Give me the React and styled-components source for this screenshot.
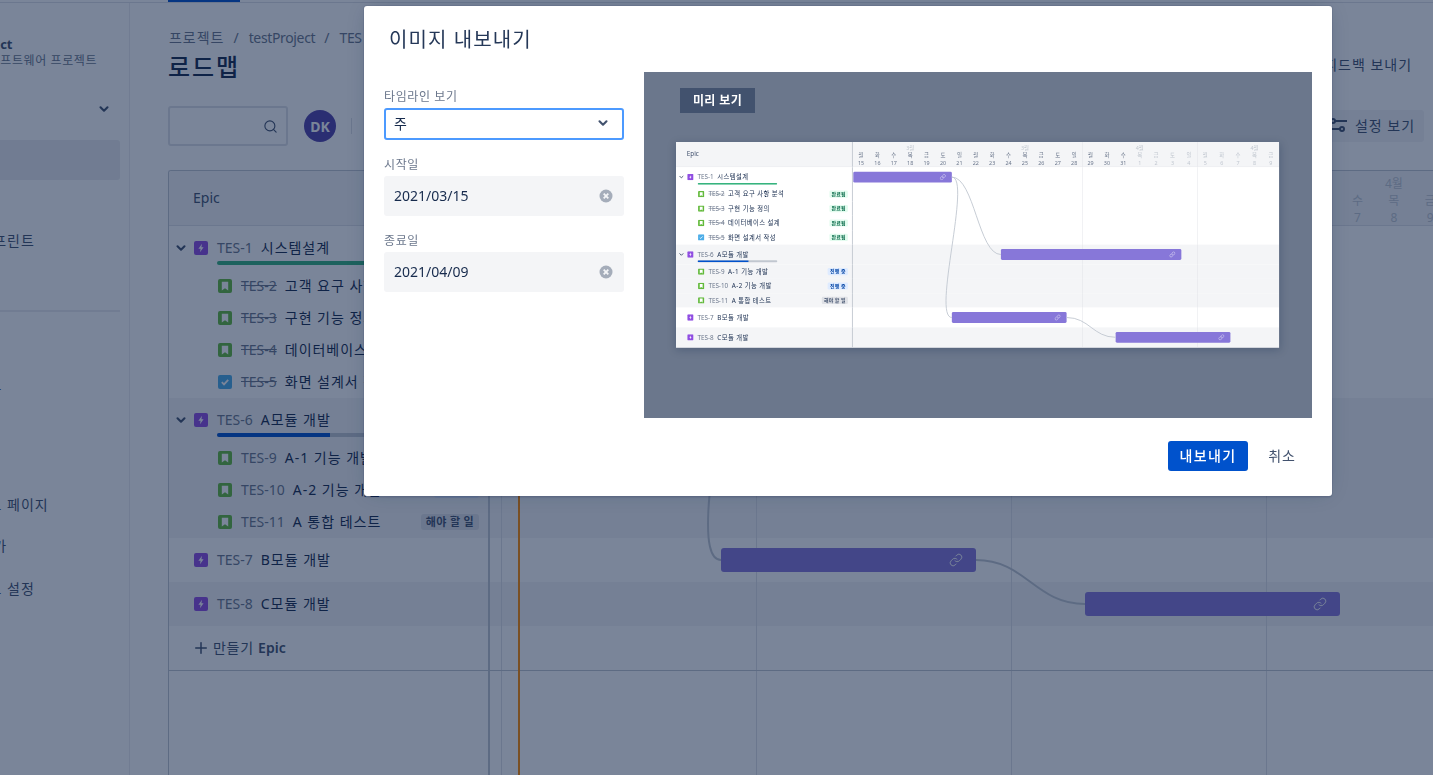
import React from 'react';
import styled, { createGlobalStyle } from 'styled-components';
import { ChevronDown, Search, Plus, Link as LinkIcon } from 'lucide-react';

const DAY = 255 / 7;
const GlobalStyle = createGlobalStyle`
  html, body { margin: 0; padding: 0; height: 100%; overflow: hidden; background: #fff; }
  body { font-family: "Noto Sans", "Noto Sans CJK KR", sans-serif; font-size: 14px; color: #172B4D; letter-spacing: .07em; }
  * { box-sizing: border-box; }
`;

const Page = styled.div`display: flex; flex-direction: column; height: 775px; width: 1433px; overflow: hidden;`;
const TopBar = styled.div`height: 3px; flex: none; background: #fff; border-bottom: 1px solid #DFE1E6; padding-left: 168px;`;
const TopTab = styled.div`width: 72px; height: 2px; background: #0052CC;`;
const Shell = styled.div`flex: 1; min-height: 0; display: flex;`;

const Sidebar = styled.aside`flex: none; width: 130px; border-right: 1px solid #EBECF0; overflow: hidden;`;
const SideInner = styled.div`width: 240px; margin-left: -110px; padding: 32px 10px 0 60px;`;
const ProjectName = styled.div`font-size: 13px; font-weight: 700; line-height: 18px; color: #42526E; letter-spacing: -.2px; white-space: nowrap; margin-left: -7px;`;
const ProjectType = styled.div`font-size: 12px; line-height: 16px; color: #6B778C; white-space: nowrap; letter-spacing: .05em;`;
const SectionRow = styled.div`display: flex; justify-content: flex-end; align-items: center; height: 20px; margin-top: 30px; padding-right: 9px; color: #42526E; margin-bottom: 21px;`;
const NavList = styled.nav`margin-left: -60px; padding-left: 60px;`;
const NavItem = styled.div`
  height: 40px; display: flex; align-items: center; white-space: nowrap; color: #42526E;
  margin: 0 0 ${p => p.$after || 0}px -60px; padding-left: 57px; border-radius: 3px;
  background: ${p => (p.$active ? '#EBECF0' : 'transparent')};
`;
const SideDivider = styled.div`height: 2px; background: #EBECF0; margin: 10px 0 12px -60px;`;

const Main = styled.main`flex: 1; min-width: 0; display: flex; flex-direction: column; padding: 24px 0 0 38px; overflow: hidden;`;
const HeadRow = styled.header`display: flex; justify-content: space-between; align-items: flex-end; padding-right: 21px;`;
const Crumbs = styled.div`display: flex; gap: 9px; line-height: 20px; color: #6B778C; padding: 1px 0 0 1px;`;
const CrumbLatin = styled.span`letter-spacing: -.35px;`;
const Title = styled.h1`margin: 3px 0 0; font-size: 24px; font-weight: 500; line-height: 32px; color: #172B4D; letter-spacing: .08em;`;
const Feedback = styled.div`line-height: 32px; padding-bottom: 2px; color: #42526E;`;
const Toolbar = styled.div`display: flex; align-items: center; margin-top: 23px; height: 40px; padding-right: 9px;`;
const SearchBox = styled.div`width: 120px; height: 40px; border: 2px solid #DFE1E6; border-radius: 3px; display: flex; align-items: center; justify-content: flex-end; padding-right: 8px; color: #42526E;`;
const Avatar = styled.div`width: 32px; height: 32px; margin-left: 16px; border-radius: 50%; background: #5243AA; color: #fff; font-weight: 700; font-size: 14px; display: flex; align-items: center; justify-content: center; letter-spacing: 0;`;
const ToolDivider = styled.div`width: 1px; height: 16px; margin-left: 15px; background: #DFE1E6;`;
const SettingsBtn = styled.div`margin-left: auto; height: 32px; padding: 0 9px 2px 8px; display: flex; align-items: center; gap: 8px; border-radius: 3px; background: #F4F5F7; color: #42526E;`;

const Table = styled.section`position: relative; flex: 1; min-height: 0; margin-top: 24px; border-top: 1px solid #C1C7D0; border-left: 1px solid #C1C7D0; border-top-left-radius: 3px; overflow: hidden; display: flex; flex-direction: column;`;
const TodayLine = styled.div`position: absolute; left: 349px; top: 0; bottom: 0; width: 2px; background: #FF8B00;`;

const gridLines = xs => xs.map(() => 'linear-gradient(#DFE1E6,#DFE1E6)').join(',');
const gridPos = xs => xs.map(x => `${x}px 0`).join(',');
const Row = styled.div`display: flex; height: ${p => p.$h}px; flex: none; background: ${p => (p.$band ? '#F4F5F7' : '#fff')};`;
const HeadWrap = styled(Row)`background: #F4F5F7; border-bottom: 1px solid #DFE1E6;`;
const LeftCell = styled.div`flex: none; width: ${p => p.$w}px; border-right: 2px solid #C1C7D0; min-width: 0; overflow: hidden;`;
const HeadLeft = styled(LeftCell)`display: flex; align-items: center; padding: 0 0 2px 24px; color: #42526E; letter-spacing: 0;`;
const EpicCell = styled(LeftCell)`padding: 12px 0 0 4px;`;
const EpicLine = styled.div`display: flex; align-items: center; height: 20px;`;
const ChevronSlot = styled.span`width: 16px; height: 16px; flex: none; margin-right: 5px; color: #42526E; display: flex; align-items: center; justify-content: center;`;
const Progress = styled.div`width: 177px; height: 3.5px; margin: 3px 0 0 44px; border-radius: 2px; overflow: hidden; background: #C1C7D0;`;
const ProgressFill = styled.div`height: 100%; width: ${p => p.$pct}%; background: ${p => p.$color};`;
const ChildCell = styled(LeftCell)`display: flex; align-items: center; padding: 0 9px 0 49px;`;
const Key = styled.span`color: #6B778C; margin: 0 8px 0 9px; padding-bottom: 2px; letter-spacing: 0; white-space: nowrap; text-decoration: ${p => (p.$done ? 'line-through' : 'none')};`;
const Name = styled.span`color: #172B4D; white-space: nowrap; flex: none; padding-bottom: 2px;`;
const Pill = styled.span`
  margin-left: auto; flex: none; height: 16px; padding: 0 5px; border-radius: 3px; font-size: 11px; font-weight: 700; line-height: 16px; white-space: nowrap; letter-spacing: .03em;
  background: ${p => p.$bg}; color: ${p => p.$fg};
`;
const TimelineCell = styled.div`
  flex: 1; min-width: 0; position: relative;
  background-image: ${p => gridLines(p.$lines)}; background-repeat: no-repeat; background-size: 1px 100%; background-position: ${p => gridPos(p.$lines)};
`;
const Weeks = styled(TimelineCell)`display: flex; padding-left: ${p => p.$offset}px; overflow: hidden;`;
const Week = styled.div`flex: none; width: 255px; padding-top: 4px; text-align: center; font-size: 12px; line-height: 17px; letter-spacing: 0;`;
const Month = styled.div`color: #C1C7D0;`;
const Days = styled.div`display: flex;`;
const Day = styled.div`flex: 1; color: ${p => (p.$muted ? '#C1C7D0' : '#6B778C')};`;
const Bar = styled.div`
  position: absolute; top: 10px; height: 24px; left: ${p => p.$left}px; width: ${p => p.$width}px; border-radius: 3px; background: #8777D9; color: #fff;
  display: flex; align-items: center; justify-content: flex-end; padding-right: 13px;
`;
const BodyWrap = styled.div`position: relative; flex: none;`;
const LinkLayer = styled.svg`position: absolute; top: 0; left: ${p => p.$left}px; overflow: visible; pointer-events: none;`;
const CreateCell = styled(LeftCell)`display: flex; align-items: center; padding: 0 0 0 23px; gap: 3px; color: #42526E;`;
const CreateText = styled.span`padding-bottom: 2px; letter-spacing: .05em;`;
const CreateEpic = styled.b`color: #42526E; letter-spacing: 0; font-weight: 600;`;
const Filler = styled.div`flex: 1; min-height: 0; display: flex; border-top: 1px solid #C1C7D0;`;

const Overlay = styled.div`position: fixed; inset: 0; background: rgba(9,30,66,.54); padding: 6px 0 0 364px;`;
const Modal = styled.div`width: 968px; height: 490px; background: #fff; border-radius: 3px; box-shadow: 0 0 0 1px rgba(9,30,66,.08), 0 2px 1px rgba(9,30,66,.08), 0 0 20px -6px rgba(9,30,66,.31); display: flex; flex-direction: column;`;
const ModalTitle = styled.h2`margin: 0; height: 66px; padding: 20px 0 0 25px; font-size: 20px; line-height: 28px; font-weight: 400; color: #253858; letter-spacing: .055em;`;
const ModalBody = styled.div`display: flex; gap: 20px; padding: 0 20px;`;
const Form = styled.div`flex: none; width: 240px; display: flex; flex-direction: column; padding-top: 16px;`;
const FieldLabel = styled.label`font-size: 12px; line-height: 16px; color: #6B778C; margin-bottom: 3px; letter-spacing: .05em; padding-top: ${p => p.$nudge || 0}px;`;
const SelectBox = styled.div`height: 32px; border: 2px solid #4C9AFF; border-radius: 3px; display: flex; align-items: center; justify-content: space-between; padding: 0 12px 2px 8px; color: #172B4D; margin-bottom: 14px;`;
const DateBox = styled.div`height: 40px; background: #F4F5F7; border-radius: 3px; display: flex; align-items: center; justify-content: space-between; padding: 0 11px 0 10px; color: #172B4D; margin-bottom: 14px; letter-spacing: 0;`;
const DateValue = styled.span`padding-bottom: 2px;`;
const PreviewPane = styled.div`flex: none; width: 668px; height: 346px; background: #6B778C; padding: 16px 32px;`;
const PreviewTag = styled.div`width: 75px; height: 25px; margin-left: 4px; background: #42526E; color: #fff; font-size: 12px; font-weight: 700; line-height: 25px; text-align: center; letter-spacing: .03em;`;
const PreviewStage = styled.div`width: 604px; height: 206px; margin-top: 29px; filter: blur(.5px); box-shadow: 0 2px 8px rgba(9,30,66,.25);`;
const PreviewSheet = styled.div`width: 1340px; height: 457px; transform: scale(.45); transform-origin: 0 0; background: #fff; overflow: hidden;`;
const Footer = styled.div`display: flex; justify-content: flex-end; align-items: center; gap: 4px; padding: 23px 20px 0;`;
const PrimaryBtn = styled.button`width: 80px; height: 30px; border: 0; border-radius: 3px; background: #0052CC; color: #fff; font: 500 14px "Noto Sans", "Noto Sans CJK KR", sans-serif; padding: 0 0 2px; letter-spacing: .1em;`;
const CancelBtn = styled.button`width: 60px; height: 30px; border: 0; background: transparent; color: #42526E; font: 400 14px "Noto Sans", "Noto Sans CJK KR", sans-serif; padding: 0 0 2px; letter-spacing: .07em;`;

const EpicIcon = () => (
  <svg width="14" height="14" viewBox="0 0 14 14" style={{ flex: 'none' }}>
    <rect width="14" height="14" rx="2" fill="#904EE2" />
    <path d="M8 2.8 4.4 7.7h2.2L6 11.2l3.6-4.9H7.4z" fill="#fff" />
  </svg>
);
const StoryIcon = () => (
  <svg width="14" height="14" viewBox="0 0 14 14" style={{ flex: 'none' }}>
    <rect width="14" height="14" rx="2" fill="#63BA3C" />
    <path d="M3.8 2.8h6.4v8.6L7 9.2l-3.2 2.2z" fill="#fff" />
  </svg>
);
const TaskIcon = () => (
  <svg width="14" height="14" viewBox="0 0 14 14" style={{ flex: 'none' }}>
    <rect width="14" height="14" rx="2" fill="#4BADE8" />
    <path d="M3.8 7.2 6 9.4l4.2-4.6" fill="none" stroke="#fff" strokeWidth="1.8" />
  </svg>
);
const ClearIcon = () => (
  <svg width="14" height="14" viewBox="0 0 14 14">
    <circle cx="7" cy="7" r="6.5" fill="#A5ADBA" />
    <path d="M4.7 4.7l4.6 4.6M9.3 4.7 4.7 9.3" stroke="#F4F5F7" strokeWidth="1.8" />
  </svg>
);
const SlidersIcon = () => (
  <svg width="18" height="14" viewBox="0 0 18 14" fill="none" stroke="#42526E" strokeWidth="2">
    <circle cx="4" cy="3" r="2" />
    <path d="M6 3h12M0 11h11" />
    <circle cx="13" cy="11" r="2" />
  </svg>
);
const Chevron = ({ color }) => <ChevronDown size={14} strokeWidth={3.6} color={color || 'currentColor'} />;

const STATUS = {
  done: { label: '완료됨', bg: '#E3FCEF', fg: '#006644' },
  doing: { label: '진행 중', bg: '#DEEBFF', fg: '#0747A6' },
  todo: { label: '해야 할 일', bg: '#DFE1E6', fg: '#42526E' },
};

const GROUPS = [
  { key: 'TES-1', name: '시스템설계', bar: [0, 6], progress: [100, '#36B37E'], children: [
    { key: 'TES-2', name: '고객 요구 사항 분석', done: true, st: 'done' },
    { key: 'TES-3', name: '구현 기능 정의', done: true, st: 'done' },
    { key: 'TES-4', name: '데이터베이스 설계', done: true, st: 'done' },
    { key: 'TES-5', name: '화면 설계서 작성', done: true, st: 'done', task: true },
  ] },
  { key: 'TES-6', name: 'A모듈 개발', band: true, bar: [9, 11], progress: [64, '#0052CC'], children: [
    { key: 'TES-9', name: 'A-1 기능 개발', st: 'doing' },
    { key: 'TES-10', name: 'A-2 기능 개발', st: 'doing' },
    { key: 'TES-11', name: 'A 통합 테스트', st: 'todo' },
  ] },
  { key: 'TES-7', name: 'B모듈 개발', bar: [6, 7] },
  { key: 'TES-8', name: 'C모듈 개발', band: true, bar: [16, 7] },
];

const WEEKS = [
  { month: '3월', days: [15, 16, 17, 18, 19, 20, 21] },
  { month: '3월', days: [22, 23, 24, 25, 26, 27, 28] },
  { month: '4월', days: [29, 30, 31, 1, 2, 3, 4] },
  { month: '4월', days: [5, 6, 7, 8, 9, 10, 11] },
];
const NAMES = ['월', '화', '수', '목', '금', '토', '일'];

const curve = (x1, y1, x2, y2, d) => `M${x1} ${y1}C${x1 + d} ${y1} ${x2 - d} ${y2} ${x2} ${y2}`;

function Roadmap({ leftWidth, offset, barOffset, lines, headHeight, withCreate }) {
  return (
    <>
      <HeadWrap $h={headHeight}>
        <HeadLeft $w={leftWidth}>Epic</HeadLeft>
        <Weeks $lines={lines} $offset={offset}>
          {WEEKS.map((w, i) => (
            <Week key={i}>
              <Month>{w.month}</Month>
              <Days>{NAMES.map((n, j) => <Day key={n} $muted={w.days[j] < 15}>{n}</Day>)}</Days>
              <Days>{w.days.map(d => <Day key={d} $muted={d < 15}>{d}</Day>)}</Days>
            </Week>
          ))}
        </Weeks>
      </HeadWrap>
      <BodyWrap>
        {GROUPS.map(g => (
          <React.Fragment key={g.key}>
            <Row $h={44} $band={g.band}>
              <EpicCell $w={leftWidth}>
                <EpicLine>
                  <ChevronSlot>{g.children && <Chevron />}</ChevronSlot>
                  <EpicIcon />
                  <Key>{g.key}</Key>
                  <Name>{g.name}</Name>
                </EpicLine>
                {g.progress && <Progress><ProgressFill $pct={g.progress[0]} $color={g.progress[1]} /></Progress>}
              </EpicCell>
              <TimelineCell $lines={lines}>
                <Bar $left={barOffset + g.bar[0] * DAY} $width={g.bar[1] * DAY}><LinkIcon size={14} strokeWidth={1.6} /></Bar>
              </TimelineCell>
            </Row>
            {g.children && g.children.map(c => (
              <Row key={c.key} $h={32} $band={g.band}>
                <ChildCell $w={leftWidth}>
                  {c.task ? <TaskIcon /> : <StoryIcon />}
                  <Key $done={c.done}>{c.key}</Key>
                  <Name>{c.name}</Name>
                  <Pill $bg={STATUS[c.st].bg} $fg={STATUS[c.st].fg}>{STATUS[c.st].label}</Pill>
                </ChildCell>
                <TimelineCell $lines={lines} />
              </Row>
            ))}
          </React.Fragment>
        ))}
        <LinkLayer $left={leftWidth + barOffset} width="950" height="400" fill="none" stroke="#C1C7D0" strokeWidth="2">
          <path d={curve(219, 22, 328, 194, 50)} />
          <path d={curve(219, 22, 219, 334, 45)} />
          <path d={curve(474, 334, 583, 378, 50)} />
        </LinkLayer>
      </BodyWrap>
      {withCreate && (
        <>
          <Row $h={44}>
            <CreateCell $w={leftWidth}>
              <Plus size={18} strokeWidth={2} />
              <CreateText>만들기 <CreateEpic>Epic</CreateEpic></CreateText>
            </CreateCell>
            <TimelineCell $lines={lines} />
          </Row>
          <Filler>
            <LeftCell $w={leftWidth} />
            <TimelineCell $lines={lines} />
          </Filler>
        </>
      )}
    </>
  );
}

export default function App() {
  return (
    <Page>
      <GlobalStyle />
      <TopBar><TopTab /></TopBar>
      <Shell>
        <Sidebar>
          <SideInner>
            <ProjectName>testProject</ProjectName>
            <ProjectType>클래식 소프트웨어 프로젝트</ProjectType>
            <SectionRow><Chevron /></SectionRow>
            <NavList>
              <NavItem $active>로드맵</NavItem>
              <NavItem>백로그</NavItem>
              <NavItem>활성 스프린트</NavItem>
              <NavItem>보고서</NavItem>
              <SideDivider />
              <NavItem>이슈</NavItem>
              <NavItem>프로젝트</NavItem>
              <NavItem>코드</NavItem>
              <NavItem>배포</NavItem>
              <NavItem $after={1}>프로젝트 페이지</NavItem>
              <NavItem $after={3}>코드 추가</NavItem>
              <NavItem>프로젝트 설정</NavItem>
            </NavList>
          </SideInner>
        </Sidebar>
        <Main>
          <HeadRow>
            <div>
              <Crumbs><span>프로젝트</span><span>/</span><CrumbLatin>testProject</CrumbLatin><span>/</span><CrumbLatin>TES 보드</CrumbLatin></Crumbs>
              <Title>로드맵</Title>
            </div>
            <Feedback>피드백 보내기</Feedback>
          </HeadRow>
          <Toolbar>
            <SearchBox><Search size={15} strokeWidth={1.8} /></SearchBox>
            <Avatar>DK</Avatar>
            <ToolDivider />
            <SettingsBtn><SlidersIcon />설정 보기</SettingsBtn>
          </Toolbar>
          <Table>
            <Roadmap leftWidth={321} offset={11.4} barOffset={12.4} headHeight={55} lines={[11, 266, 521, 776]} withCreate />
            <TodayLine />
          </Table>
        </Main>
      </Shell>
      <Overlay>
        <Modal>
          <ModalTitle>이미지 내보내기</ModalTitle>
          <ModalBody>
            <Form>
              <FieldLabel $nudge={1}>타임라인 보기</FieldLabel>
              <SelectBox>주<Chevron color="#42526E" /></SelectBox>
              <FieldLabel $nudge={3}>시작일</FieldLabel>
              <DateBox><DateValue>2021/03/15</DateValue><ClearIcon /></DateBox>
              <FieldLabel $nudge={3}>종료일</FieldLabel>
              <DateBox><DateValue>2021/04/09</DateValue><ClearIcon /></DateBox>
            </Form>
            <PreviewPane>
              <PreviewTag>미리 보기</PreviewTag>
              <PreviewStage>
                <PreviewSheet>
                  <Roadmap leftWidth={393} offset={0} barOffset={1} headHeight={56} lines={[510, 765]} />
                </PreviewSheet>
              </PreviewStage>
            </PreviewPane>
          </ModalBody>
          <Footer>
            <PrimaryBtn>내보내기</PrimaryBtn>
            <CancelBtn>취소</CancelBtn>
          </Footer>
        </Modal>
      </Overlay>
    </Page>
  );
}
